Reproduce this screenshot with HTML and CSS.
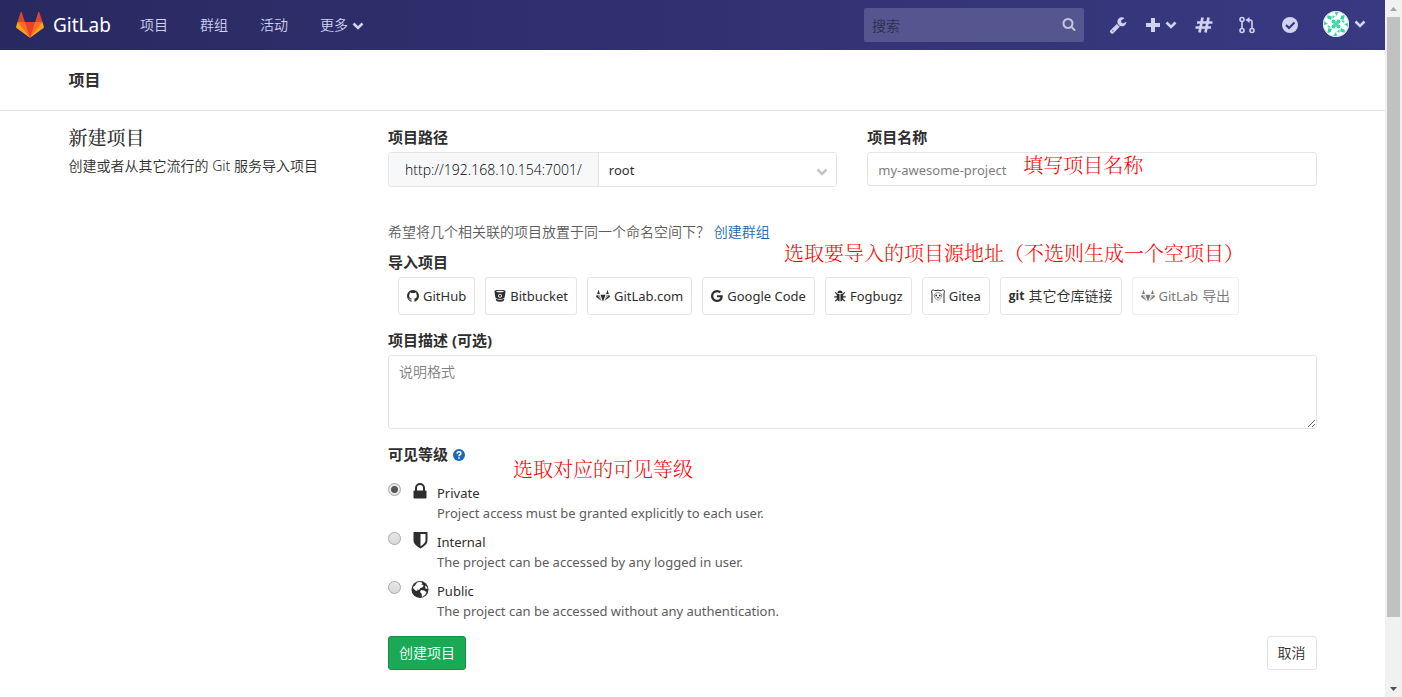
FILE: index.html
```html
<!DOCTYPE html>
<html lang="zh-CN">
<head>
<meta charset="utf-8">
<meta name="viewport" content="width=device-width, initial-scale=1">
<title>新建项目 · GitLab</title>
<link rel="stylesheet" href="styles.css">
</head>
<body>
<svg class="defs" aria-hidden="true">
  <symbol id="chevron" viewBox="0 0 12 8"><path d="M1.500 1.500 6 6l4.500-4.500" fill="none" stroke="currentColor" stroke-width="2.600"/></symbol>
  <symbol id="tanuki" viewBox="0 0 36 36"><path fill="currentColor" d="M3 13 6.500 2 10 13zM33 13 29.500 2 26 13zM11.500 15h13L18 33zM0 20l2.500-6L15 31.500zM36 20l-2.500-6L21 31.500z"/><path fill="currentColor" opacity=".5" d="M4 15h5l5.500 14zM32 15h-5l-5.500 14z"/></symbol>
</svg>
<div class="page">
  <header class="navbar">
    <a class="brand" href="#">
      <svg class="brand-logo" viewBox="0 0 36 36" aria-hidden="true">
        <path fill="#e24329" d="M2 14l9.380 9v-9l-4-12.280c-.205-.632-1.176-.632-1.380 0zM34 14l-9.380 9v-9l4-12.280c.205-.632 1.176-.632 1.380 0zM18 34.380 3 14h30z"/>
        <path fill="#fc6d26" d="M18 34.380 11.380 14H2l4 11zM18 34.380 24.620 14H34l-4 11z"/>
        <path fill="#fca326" d="M2 14 .1 20.160c-.18.565 0 1.200.5 1.560L18 34.380zM34 14l1.900 6.160c.18.565 0 1.200-.5 1.560L18 34.380z"/>
      </svg>
      <span>GitLab</span>
    </a>
    <nav class="nav-links">
      <a href="#">项目</a>
      <a href="#">群组</a>
      <a href="#">活动</a>
      <a href="#">更多 <svg class="chevron" aria-hidden="true"><use href="#chevron"/></svg></a>
    </nav>
    <form class="search" role="search">
      <input type="search" placeholder="搜索" aria-label="搜索">
      <svg viewBox="0 0 1792 1792" aria-hidden="true"><path fill="currentColor" d="M1216 832q0-185-131.500-316.500t-316.500-131.500-316.500 131.500-131.500 316.500 131.500 316.500 316.500 131.500 316.500-131.500 131.500-316.500zm512 832q0 52-38 90t-90 38q-54 0-90-38l-343-342q-179 124-399 124-143 0-273.500-55.500t-225-150-150-225-55.500-273.500 55.500-273.500 150-225 225-150 273.500-55.500 273.500 55.500 225 150 150 225 55.500 273.500q0 220-124 399l343 343q37 37 37 90z"/></svg>
    </form>
    <div class="nav-tools">
      <a class="tool" href="#" aria-label="管理"><svg viewBox="0 0 1792 1792"><path fill="currentColor" d="M448 1472q0-26-19-45t-45-19-45 19-19 45 19 45 45 19 45-19 19-45zm644-420l-682 682q-37 37-90 37-52 0-91-37l-106-108q-38-36-38-90 0-53 38-91l681-681q39 98 114.500 173.500t173.500 114.500zm634-435q0 39-23 106-47 134-164.500 217.500t-258.500 83.500q-185 0-316.500-131.500t-131.500-316.500 131.500-316.500 316.500-131.500q58 0 121.500 16.500t107.500 46.500q16 11 16 28t-16 28l-293 169v224l193 107q5-3 79-48.500t135.500-81 70.500-35.500q15 0 23.500 10t8.500 25z"/></svg></a>
      <button class="tool" type="button" aria-label="新建"><svg viewBox="0 0 18 18"><path d="M9 2v14M2 9h14" stroke="currentColor" stroke-width="4"/></svg><svg class="chevron"><use href="#chevron"/></svg></button>
      <a class="tool" href="#" aria-label="问题"><svg viewBox="0 0 18 18"><path d="M7.500 1.500l-3 15M13.500 1.500l-3 15M2 6.500h15.500M.5 11.500H16" fill="none" stroke="currentColor" stroke-width="2.700"/></svg></a>
      <a class="tool" href="#" aria-label="合并请求"><svg viewBox="0 0 18 18"><g fill="none" stroke="currentColor" stroke-width="1.600"><circle cx="4" cy="3.500" r="2"/><circle cx="4" cy="14.500" r="2"/><circle cx="14" cy="14.500" r="2"/><path d="M4 5.500v7M14 12.500V6q0-2-2-2h-2"/></g><path fill="currentColor" d="M11.500 1v6L7.500 4z"/></svg></a>
      <a class="tool" href="#" aria-label="待办"><svg viewBox="0 0 18 18"><circle cx="9" cy="9" r="8" fill="currentColor"/><path d="M5 9l3 3 5.500-5.500" fill="none" stroke="#38387f" stroke-width="2.200"/></svg></a>
      <button class="user" type="button" aria-label="用户">
        <svg class="avatar" viewBox="0 0 26 26">
          <circle cx="13" cy="13" r="13" fill="#fff"/>
          <g fill="#2fd9a0"><path id="leaf" d="M12 1h4l-3 4zM4 4l5 1.500L8 9 4.500 7.500zM9.500 4.500 12 5 9.500 8z"/><use href="#leaf" transform="rotate(90 13 13)"/><use href="#leaf" transform="rotate(180 13 13)"/><use href="#leaf" transform="rotate(270 13 13)"/><path d="M10.500 12.200h5v1.600h-5zM12.200 10.500h1.600v5h-1.600z"/><circle cx="10.500" cy="10.500" r="1.900"/><circle cx="15.500" cy="10.500" r="1.900"/><circle cx="10.500" cy="15.500" r="1.900"/><circle cx="15.500" cy="15.500" r="1.900"/></g>
          <circle cx="13" cy="13" r="12.500" fill="none" stroke="#cfe3ec"/>
        </svg>
        <svg class="chevron"><use href="#chevron"/></svg>
      </button>
    </div>
  </header>

  <div class="subnav"><div class="container"><strong>项目</strong></div></div>

  <main class="container layout">
    <section class="intro">
      <h1>新建项目</h1>
      <p>创建或者从其它流行的 Git 服务导入项目</p>
    </section>
    <form class="project-form">
      <div class="fields">
        <div class="field">
          <label class="label" for="namespace">项目路径</label>
          <div class="path-group">
            <span class="addon">http://192.168.10.154:7001/</span>
            <div class="select-wrap">
              <select id="namespace"><option>root</option></select>
              <svg class="chevron" aria-hidden="true"><use href="#chevron"/></svg>
            </div>
          </div>
        </div>
        <div class="field">
          <label class="label" for="name">项目名称</label>
          <input id="name" class="text-input" type="text" placeholder="my-awesome-project">
          <span class="note note-name">填写项目名称</span>
        </div>
      </div>
      <p class="help">希望将几个相关联的项目放置于同一个命名空间下？ <a href="#">创建群组</a></p>

      <div class="group">
        <span class="label">导入项目</span>
        <div class="imports">
          <a class="btn" href="#"><svg viewBox="128 128 1536 1536"><path fill="currentColor" d="M896 128q209 0 385.500 103t279.500 279.500 103 385.500q0 251-146.500 451.500t-378.500 277.500q-27 5-40-7t-13-30q0-3 .5-76.500t.5-134.500q0-97-52-142 57-6 102.500-18t94-39 81-66.500 53-105 20.500-150.500q0-119-79-206 37-91-8-204-28-9-81 11t-92 44l-38 24q-93-26-192-26t-192 26q-16-11-42.500-27t-83.500-38.500-85-13.500q-45 113-8 204-79 87-79 206 0 85 20.500 150t52.500 105 80.500 67 94 39 102.500 18q-39 36-49 103-21 10-45 15t-57 5-65.500-21.500-55.500-62.500q-19-32-48.500-52t-49.500-24l-20-3q-21 0-29 4.500t-5 11.500 9 14 13 12l7 5q22 10 43.500 38t31.500 51l10 23q13 38 44 61.500t67 30 69.500 7 55.500-3.500l23-4q0 38 .5 88.500t.5 54.500q0 18-13 30t-40 7q-232-77-378.500-277.500t-146.500-451.500q0-209 103-385.500t279.500-279.500 385.500-103z"/></svg>GitHub</a>
          <a class="btn" href="#"><svg viewBox="1 1 12 13"><path fill="currentColor" d="M1 2.500Q1 .8 7 .8t6 1.700l-1 6.500q-1 1.800-5 1.800T2 9zM2.300 10.500q4.700 2.200 9.400 0l-.5 2q-1 1.300-4.200 1.300t-4.200-1.300z"/><ellipse cx="7" cy="2.600" rx="4.200" ry=".8" fill="#fff"/><circle cx="7" cy="7.300" r="1.700" fill="none" stroke="#fff"/></svg>Bitbucket</a>
          <a class="btn" href="#"><svg class="wide"><use href="#tanuki"/></svg>GitLab.com</a>
          <a class="btn" href="#"><svg viewBox="128 128 1536 1536"><path fill="currentColor" d="M896 786h725q12 67 12 128 0 217-91 387.500t-259.500 266.500-386.500 96q-157 0-299-60.500t-245-163.500-163.500-245-60.500-299 60.500-299 163.500-245 245-163.500 299-60.500q300 0 515 201l-209 201q-123-119-306-119-129 0-238.500 65t-173.500 176.500-64 243.500 64 243.500 173.500 176.500 238.500 65q87 0 160-24t120-60 82-82 51.500-87 22.500-78h-436v-264z"/></svg>Google Code</a>
          <a class="btn" href="#"><svg viewBox="0.500 0.500 13 13"><path fill="currentColor" d="M4.200 3.800a2.800 2.800 0 0 1 5.600 0zM3.500 4.500h3v8.500Q3.500 12.500 3.500 9zM10.500 4.500h-3v8.500q3-.5 3-4z"/><path d="M1.800 3l2.200 2.300M12.200 3 10 5.300M.8 8h3M13.200 8h-3M1.800 12.500l2.200-2M12.200 12.500l-2.200-2" stroke="currentColor" stroke-width="1.300"/></svg>Fogbugz</a>
          <a class="btn" href="#"><svg class="wide" viewBox="0 0 14 14"><path d="M1 14V4Q-.5 1 2.500 1q1 .5 1.500.7 3-1 6 0Q10.500 1.500 11.500 1q3 0 1.500 3v10" fill="none" stroke="currentColor"/><path d="M3 6q1.500-2.500 4-2.500T11 6q0 3-4 5.500Q3 9 3 6z" fill="none" stroke="currentColor" stroke-width=".5"/><circle cx="5.200" cy="6.500" r=".9" fill="currentColor"/><circle cx="8.800" cy="6.500" r=".9" fill="currentColor"/><path d="M6 8h2l-1 2z" fill="currentColor"/></svg>Gitea</a>
          <a class="btn" href="#"><b class="git">git</b><span class="zh">其它仓库链接</span></a>
          <a class="btn muted" href="#"><svg class="wide"><use href="#tanuki"/></svg>GitLab <span class="zh">导出</span></a>
        </div>
        <span class="note note-import">选取要导入的项目源地址（不选则生成一个空项目）</span>
      </div>

      <div class="group">
        <label class="label" for="description">项目描述 (可选)</label>
        <textarea id="description" placeholder="说明格式"></textarea>
      </div>

      <fieldset class="group visibility">
        <legend class="label">可见等级 <svg viewBox="0 0 12 12" aria-hidden="true"><circle cx="6" cy="6" r="6" fill="#1b69b6"/><path d="M4 4.600q.1-1.800 2-1.800t2 1.500Q8 5.200 6.900 5.700 6 6.100 6 7.200" fill="none" stroke="#fff" stroke-width="1.500"/><path d="M5.200 8.200h1.600v1.500H5.200z" fill="#fff"/></svg></legend>
        <span class="note note-level">选取对应的可见等级</span>
        <div class="option">
          <input type="radio" name="level" id="private" checked>
          <svg viewBox="0 0 18 18" aria-hidden="true"><path d="M5 8V5a4 4 0 0 1 8 0v3" fill="none" stroke="currentColor" stroke-width="2"/><rect x="2.500" y="7.500" width="13" height="8" rx="1" fill="currentColor"/></svg>
          <div><label for="private">Private</label><p>Project access must be granted explicitly to each user.</p></div>
        </div>
        <div class="option">
          <input type="radio" name="level" id="internal">
          <svg viewBox="0 0 18 18" aria-hidden="true"><path fill="currentColor" fill-rule="evenodd" d="M2.500 0h14v8.500q0 4-7 8-7-4-7-8zM9.500 2v12.200q5-3.200 5-5.700V2z"/></svg>
          <div><label for="internal">Internal</label><p>The project can be accessed by any logged in user.</p></div>
        </div>
        <div class="option">
          <input type="radio" name="level" id="public">
          <svg viewBox="0 0 18 18" aria-hidden="true"><circle cx="9" cy="8.500" r="8.500" fill="currentColor"/><path fill="#fff" d="M6 1.500l3-.8L11.500 2l-1 1.500 2 .5-.5 2-2.500 1L8 9l-2-.5.5 1.500-2-.5-2.200-2L2 6l2-1.500zM10 9l3 .5 2.500 1.500-1.500 3-3 2-.5-3.500L9 11zM14 4.500 16 6l.5 2-2-.5z"/></svg>
          <div><label for="public">Public</label><p>The project can be accessed without any authentication.</p></div>
        </div>
      </fieldset>

      <div class="actions">
        <button class="submit" type="submit">创建项目</button>
        <a class="cancel" href="#">取消</a>
      </div>
    </form>
  </main>
</div>
<div class="scrollbar" aria-hidden="true">
  <svg viewBox="0 0 17 17"><path fill="#a3a3a3" d="M5 11l3.500-4 3.500 4z"/></svg>
  <div class="thumb"></div>
  <svg viewBox="0 0 17 17"><path fill="#505050" d="M5 7l3.500 4L12 7z"/></svg>
</div>
</body>
</html>
```
FILE: styles.css
```css
* { box-sizing: border-box; }

body {
  margin: 0;
  display: grid;
  grid-template-columns: minmax(0, 1fr) 17px;
  min-height: 100vh;
  background: #fff;
  color: #2e2e2e;
  font: 350 14px/20px "Noto Sans", "Noto Sans CJK SC", sans-serif;
}

a { text-decoration: none; }
p { margin: 0; }
input, select, textarea, button { font: inherit; color: inherit; }
.defs { position: absolute; width: 0; height: 0; }
.chevron { width: 12px; height: 8px; }

/* Top bar */
.navbar {
  display: flex;
  align-items: center;
  height: 50px;
  padding-left: 16px;
  background: linear-gradient(to right, #292961, #393982);
  color: #d1d1f0;
}
.brand {
  display: flex;
  align-items: center;
  gap: 9px;
  width: 124px;
  color: #fff;
  font-size: 19px;
  font-weight: 400;
}
.brand-logo { width: 28px; height: 28px; }
.nav-links { display: flex; gap: 32px; margin-right: auto; }
.nav-links a { color: #d1d1f0; }
.search { position: relative; width: 220px; margin-right: 12px; }
.search input {
  display: block;
  width: 100%;
  height: 34px;
  padding: 0 32px 0 8px;
  border: 0;
  border-radius: 2px;
  background: #555590;
}
.search input::placeholder { color: #2e2e4e; opacity: 1; }
.search svg {
  position: absolute;
  top: 9px;
  right: 8px;
  width: 14px;
  height: 14px;
  color: #c4c4e4;
}
.nav-tools { display: flex; }
.tool, .user {
  display: flex;
  align-items: center;
  justify-content: center;
  gap: 3px;
  width: 43px;
  height: 50px;
  padding: 0;
  border: 0;
  background: none;
  color: #d1d1f0;
}
.tool svg:first-child { width: 18px; height: 18px; }
.user { gap: 5px; width: 74px; padding: 0 19px 2px 12px; }
.avatar { width: 26px; height: 26px; flex: none; }
.user .chevron { flex: none; }

/* Section title bar */
.container { width: 100%; max-width: 1280px; margin: 0 auto; padding: 0 16px; }
.subnav { border-bottom: 1px solid #e5e5e5; font-size: 16px; line-height: 60px; }
.subnav strong { font-weight: 700; }

/* Page body */
.layout {
  display: grid;
  grid-template-columns: repeat(12, minmax(0, 1fr));
  column-gap: 30px;
  padding-top: 16px;
}
.intro { grid-column: span 3; }
.intro h1 {
  margin: 0 0 5px;
  font: 500 19px/24px "Liberation Serif", "Noto Serif CJK SC", "Noto Sans CJK SC", serif;
}
.project-form { grid-column: span 9; }
.label {
  display: block;
  margin-bottom: 5px;
  padding: 0;
  font-size: 15px;
  font-weight: 700;
}
.fields { display: grid; grid-template-columns: 1fr 1fr; gap: 30px; }
.field, .group { position: relative; }
.path-group {
  display: flex;
  height: 35px;
  border: 1px solid #e5e5e5;
  border-radius: 3px;
  overflow: hidden;
}
.addon {
  padding: 0 16px;
  border-right: 1px solid #e5e5e5;
  background: #f7f8fa;
  color: #000;
  font-family: "Open Sans", sans-serif;
  font-weight: 300;
  line-height: 33px;
}
.select-wrap { position: relative; flex: 1; }
.select-wrap select {
  width: 100%;
  height: 100%;
  padding: 0 10px;
  border: 0;
  appearance: none;
  background: #fff;
  font-size: 13px;
  font-weight: 400;
}
.select-wrap .chevron { position: absolute; right: 8px; top: 15px; color: #c4c4c4; }
.text-input, textarea {
  display: block;
  width: 100%;
  border: 1px solid #e5e5e5;
  border-radius: 3px;
  background: #fff;
}
.text-input { height: 34px; padding: 1px 10px 0; font-size: 13px; font-weight: 400; }
textarea { height: 74px; padding: 6px 10px; }
::placeholder { color: #7e7e7e; opacity: 1; }
.help { margin: 35px 0 10px; color: #5c5c5c; }
.help a { color: #1b69b6; }
.group { margin: 0 0 15px; }
.imports { display: flex; flex-wrap: wrap; gap: 10px; padding-left: 10px; }
.btn, .cancel {
  display: flex;
  align-items: center;
  border: 1px solid #e5e5e5;
  border-radius: 3px;
  background: #fff;
  color: #2e2e2e;
  white-space: nowrap;
}
.btn { gap: 4px; height: 38px; padding: 0 8px; font-size: 13px; font-weight: 400; }
.btn svg { width: 12px; height: 12px; flex: none; }
.btn .wide { width: 14px; height: 14px; }
.zh { font-size: 14px; font-weight: 350; }
.git { font-family: "Open Sans", sans-serif; font-size: 12px; font-weight: 700; }
.muted { opacity: .65; }

/* Visibility choices */
.visibility { padding: 0; border: 0; }
.visibility legend { margin-bottom: 19px; }
.visibility legend svg { width: 12px; height: 12px; margin-left: 1px; vertical-align: -1px; }
.option {
  display: grid;
  grid-template-columns: 13px 18px 1fr;
  align-items: start;
  margin-bottom: 9px;
  font-size: 13px;
  font-weight: 400;
}
.option:last-child { margin-bottom: 0; }
.option input {
  appearance: none;
  width: 13px;
  height: 13px;
  margin: 0;
  border: 1px solid #a8a8a8;
  border-radius: 50%;
  background: linear-gradient(#e8e8e8, #d8d8d8);
}
.option input:checked { background: radial-gradient(circle, #555 0 3px, #e6e6e6 4px); }
.option svg { width: 18px; height: 18px; margin-left: 10px; }
.option div { padding-left: 18px; }
.option p { color: #5c5c5c; }

.actions { display: flex; justify-content: space-between; }
.submit, .cancel { height: 34px; padding: 0 10px; }
.submit {
  border: 1px solid #168f48;
  border-radius: 3px;
  background: #1aaa55;
  color: #fff;
}

/* Guide notes over the form */
.note {
  position: absolute;
  color: #f00;
  font: 300 20px/24px "Liberation Serif", "Noto Serif CJK SC", "Noto Sans CJK SC", serif;
  white-space: nowrap;
}
.note-name { left: 156px; top: 27px; }
.note-import { left: 396px; top: -10px; }
.note-level { left: 125px; top: -25px; }

/* Window scrollbar */
.scrollbar {
  display: grid;
  grid-template-rows: 17px 1fr 17px;
  position: sticky;
  top: 0;
  height: 100vh;
  background: #f1f1f1;
}
.scrollbar svg { width: 17px; height: 17px; }
.thumb { height: 90.500%; margin: 0 2px; background: #c1c1c1; }
```
